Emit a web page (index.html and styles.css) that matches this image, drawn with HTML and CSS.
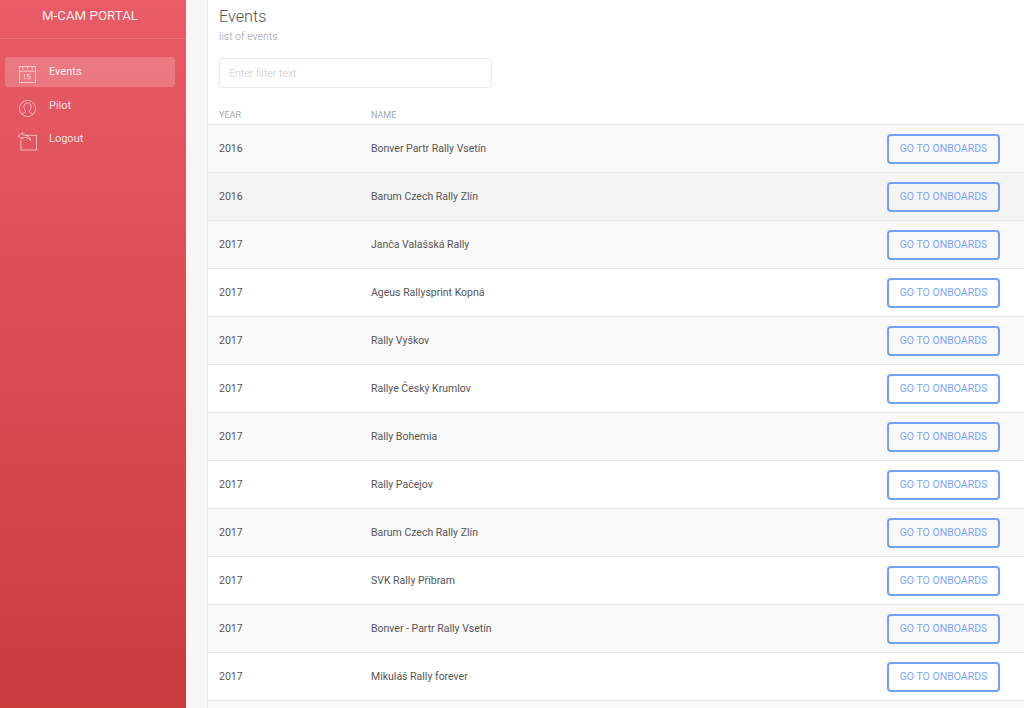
FILE: index.html
```html
<!DOCTYPE html>
<html lang="en">
<head>
<meta charset="utf-8">
<title>M-CAM Portal</title>
<link rel="stylesheet" href="styles.css">
</head>
<body>
<div class="app">
  <aside class="sidebar">
    <div class="brand">M-CAM PORTAL</div>
    <nav class="nav">
      <a class="nav-item active">
        <svg class="nav-icon" viewBox="0 0 18 18" fill="none" stroke="currentColor" stroke-width="0.9"><rect x="0.5" y="0.5" width="17" height="17"/><path d="M0.5 5.500H17.500M4 0.500V3M9 0.500V3M14 0.500V3"/><path d="M4.800 9.200l1.300-.6v5.400M9 8.700h3.200M9 8.700v2.300c2.200-.6 3.300.3 3.100 1.400-.2 1.300-2 1.600-3.100.8"/></svg>
        <span>Events</span>
      </a>
      <a class="nav-item">
        <svg class="nav-icon" viewBox="0 0 18 18" fill="none" stroke="currentColor" stroke-width="0.9"><circle cx="9" cy="9" r="8.500"/><path d="M3.500 15.500c.6-1.800 2.500-2 3.500-2.800.3-1-1.800-2.600-1.800-5.500C5.200 4.500 7 3.200 9 3.200s3.800 1.300 3.800 4c0 2.900-2.100 4.500-1.800 5.500 1 .8 2.900 1 3.500 2.800"/></svg>
        <span>Pilot</span>
      </a>
      <a class="nav-item">
        <svg class="nav-icon" viewBox="0 0 18 18" fill="none" stroke="currentColor" stroke-width="0.9"><path d="M6.500 2.500H18.500V18H2V7.500"/><path d="M4 -.6L-1.200 3.300 3.400 6.400 3.200 4.700C7 4.300 10.500 5 12.300 8 12.300 4 8.500 2.400 3.900 1.800z"/></svg>
        <span>Logout</span>
      </a>
    </nav>
  </aside>
  <main class="content">
    <header class="page-head">
      <h1>Events</h1>
      <p>list of events</p>
    </header>
    <div class="filter"><input type="text" placeholder="Enter filter text"></div>
    <table class="events">
      <thead>
        <tr><th class="col-year">Year</th><th class="col-name">Name</th><th></th></tr>
      </thead>
      <tbody>
        <tr><td>2016</td><td>Bonver Partr Rally Vsetín</td><td class="col-act"><button>GO TO ONBOARDS</button></td></tr>
        <tr class="hover"><td>2016</td><td>Barum Czech Rally Zlín</td><td class="col-act"><button>GO TO ONBOARDS</button></td></tr>
        <tr><td>2017</td><td>Janča Valašská Rally</td><td class="col-act"><button>GO TO ONBOARDS</button></td></tr>
        <tr><td>2017</td><td>Ageus Rallysprint Kopná</td><td class="col-act"><button>GO TO ONBOARDS</button></td></tr>
        <tr><td>2017</td><td>Rally Vyškov</td><td class="col-act"><button>GO TO ONBOARDS</button></td></tr>
        <tr><td>2017</td><td>Rallye Český Krumlov</td><td class="col-act"><button>GO TO ONBOARDS</button></td></tr>
        <tr><td>2017</td><td>Rally Bohemia</td><td class="col-act"><button>GO TO ONBOARDS</button></td></tr>
        <tr><td>2017</td><td>Rally Pačejov</td><td class="col-act"><button>GO TO ONBOARDS</button></td></tr>
        <tr><td>2017</td><td>Barum Czech Rally Zlín</td><td class="col-act"><button>GO TO ONBOARDS</button></td></tr>
        <tr><td>2017</td><td>SVK Rally Příbram</td><td class="col-act"><button>GO TO ONBOARDS</button></td></tr>
        <tr><td>2017</td><td>Bonver - Partr Rally Vsetín</td><td class="col-act"><button>GO TO ONBOARDS</button></td></tr>
        <tr><td>2017</td><td>Mikuláš Rally forever</td><td class="col-act"><button>GO TO ONBOARDS</button></td></tr>
        <tr><td></td><td></td><td></td></tr>
      </tbody>
    </table>
  </main>
</div>
</body>
</html>
```
FILE: styles.css
```css
* { box-sizing: border-box; }
html, body { margin: 0; height: 100%; overflow: hidden; }
body { font-family: Roboto, "Liberation Sans", sans-serif; background: #f7f7f8; color: #555; }
.app { display: flex; height: 708px; overflow: hidden; }
.sidebar {
  width: 186px; flex: none; color: #fff;
  background: linear-gradient(180deg, #e95b66 0%, #ca3b40 100%);
}
.brand {
  height: 39px; border-bottom: 1px solid rgba(255,255,255,.13);
  text-align: center; font-size: 13.300px; line-height: 32px;
  padding-right: 6px; color: rgba(255,255,255,.9);
}
.nav { padding: 18px 11px 0 5px; display: flex; flex-direction: column; gap: 4px; }
.nav-item {
  height: 29.500px; display: flex; align-items: flex-start; gap: 13px; padding-left: 14px; border-radius: 3px;
  font-size: 11px; line-height: 29px; color: rgba(255,255,255,.85);
}
.nav-item.active { background: rgba(255,255,255,.2); color: rgba(255,255,255,.9); }
.nav-icon { width: 17px; height: 17px; margin-top: 9px; flex: none; opacity: .8; overflow: visible; }
.content { margin-left: 21px; flex: 1; min-width: 0; background: #fff; border-left: 1px solid #ececec; }
.page-head { padding: 7px 0 0 11px; }
.page-head h1 { margin: 0; font-size: 16.200px; font-weight: 300; line-height: 19px; color: #555; }
.page-head p { margin: 4px 0 0; font-size: 10.600px; line-height: 14px; color: #999; font-weight: 300; }
.filter { padding: 14px 0 0 11px; }
.filter input {
  display: block; width: 273px; height: 30px; border: 1px solid #e8e8e8; border-radius: 3px; padding: 0 9px;
  font: 300 10.600px Roboto, sans-serif; background: #fff; outline: none;
}
.filter input::placeholder { color: #c9c9c9; }
.events { margin-top: 17px; width: 100%; border-collapse: collapse; table-layout: fixed; }
.events th {
  height: 19px; padding: 1px 0 0 11px; text-align: left; font-size: 9px; font-weight: 400; color: #a6a6a6;
  text-transform: uppercase; line-height: 18px; vertical-align: top;
}
.col-year { width: 152px; }
.col-name { width: 500px; }
.events td { height: 48px; padding: 0 0 0 11px; border-top: 1px solid #e6e6e6; font-size: 10.500px; color: #555; }
.events tbody tr:nth-child(odd) { background: #f9f9f9; }
.events tbody tr:nth-child(even) { background: #fff; }
.events tbody tr.hover { background: #f4f4f4; }
.events td.col-act { padding: 0; }
.events button {
  display: block; width: 113px; height: 30px; margin-left: 27px; background: transparent;
  border: 2px solid #72a0f8; border-radius: 4px; color: #7ba5f7; font: 400 10.500px Roboto, sans-serif; padding: 0;
}
```
